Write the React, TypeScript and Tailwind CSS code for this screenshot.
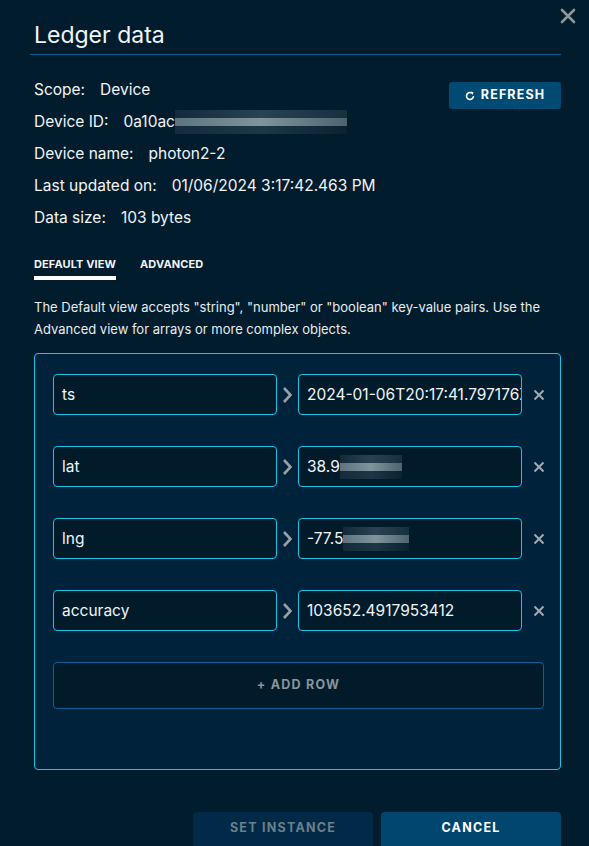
import React from "react";

const font = { fontFamily: "Inter, 'Open Sans', sans-serif" };

const Blur = ({ w }: { w: string }) => (
  <span className={`inline-flex flex-col h-[24px] ${w} align-middle`}>
    <span className="h-[8px] bg-gradient-to-r from-[#122a3a] via-[#2a4352] to-[#15303f]" />
    <span className="h-[8px] bg-gradient-to-r from-[#5d737f] via-[#7f949c] to-[#4d6470]" />
    <span className="h-[8px] bg-gradient-to-r from-[#142c3b] via-[#1d3746] to-[#0b2231]" />
  </span>
);

const rows = [
  { k: "ts", v: "2024-01-06T20:17:41.797176Z", blur: "" },
  { k: "lat", v: "38.9", blur: "w-[62px]" },
  { k: "lng", v: "-77.5", blur: "w-[66px]" },
  { k: "accuracy", v: "103652.4917953412", blur: "" },
];

const Info = ({ label, children }: { label: string; children: React.ReactNode }) => (
  <div className="flex items-center h-[32px]">
    <span className="mr-[15px]">{label}</span>
    {children}
  </div>
);

export default function App() {
  return (
    <div style={font} className="relative w-[589px] h-[846px] overflow-hidden bg-[#011c2d] text-[#f1f5f8]">
      <button className="absolute right-[12px] top-[7px] text-[#8e969c]">
        <svg width="18" height="18" viewBox="0 0 18 18">
          <path d="M3 3 L15 15 M15 3 L3 15" stroke="currentColor" strokeWidth="2.6" strokeLinecap="round" />
        </svg>
      </button>

      <div className="pl-[30px] pr-[28px] pt-[19px]">
        <h1 className="text-[23px] leading-[33px] pl-[4px] pb-[2px] border-b border-[#0a5e93]">Ledger data</h1>

        <div className="flex justify-between mt-[19px]">
          <div className="pl-[4px] text-[15.5px]">
            <Info label="Scope:">
              <span>Device</span>
            </Info>
            <Info label="Device ID:">
              <span>0a10ac</span>
              <Blur w="w-[172px]" />
            </Info>
            <Info label="Device name:">
              <span>photon2-2</span>
            </Info>
            <Info label="Last updated on:">
              <span>01/06/2024 3:17:42.463 PM</span>
            </Info>
            <Info label="Data size:">
              <span>103 bytes</span>
            </Info>
          </div>
          <button className="mt-[8px] h-[27px] w-[112px] rounded-[3px] bg-[#004a74] text-[12.5px] font-bold tracking-[0.09em] text-white flex items-center justify-center gap-[6px]">
            <svg width="10" height="10" viewBox="0 0 10 10">
              <path d="M8.5 5 A3.5 3.5 0 1 1 7 2.1" fill="none" stroke="white" strokeWidth="1.6" />
              <path d="M6 0.5 L8.6 1.6 L7.2 4 Z" fill="white" />
            </svg>
            REFRESH
          </button>
        </div>

        <div className="flex gap-[24px] mt-[22px] pl-[4px] text-[11px] font-bold tracking-[0.01em] uppercase">
          <div className="flex flex-col">
            <span className="leading-[16px]">Default View</span>
            <span className="h-[4px] bg-white mt-[4px]" />
          </div>
          <span className="leading-[16px]">Advanced</span>
        </div>

        <p className="mt-[16px] pl-[4px] text-[13px] leading-[22px] text-[#e8edf0]">
          The Default view accepts "string", "number" or "boolean" key-value pairs. Use the Advanced view for arrays or
          more complex objects.
        </p>

        <div className="ml-[4px] mt-[13px] w-[527px] h-[417px] rounded-[4px] border border-[#17c6e6] bg-[#00223a] px-[18px] pt-[20px]">
          <div className="flex flex-col gap-[31px]">
            {rows.map((r) => (
              <div key={r.k} className="flex items-center">
                <div className="shrink-0 w-[224px] h-[41px] rounded-[4px] border border-[#17c6e6] bg-[#011b2b] px-[8px] flex items-center text-[15.5px]">
                  {r.k}
                </div>
                <svg className="shrink-0 mx-[4px]" width="13" height="20" viewBox="0 0 13 20">
                  <path d="M3 3 L9.5 10 L3 17" fill="none" stroke="#9aa0a5" strokeWidth="2.6" />
                </svg>
                <div className="shrink-0 w-[224px] h-[41px] rounded-[4px] border border-[#17c6e6] bg-[#011b2b] px-[8px] flex items-center text-[15.5px] overflow-hidden whitespace-nowrap">
                  {r.v}
                  {r.blur && <Blur w={r.blur} />}
                </div>
                <svg className="shrink-0 ml-[11px]" width="12" height="12" viewBox="0 0 12 12">
                  <path d="M1.5 1.5 L10.5 10.5 M10.5 1.5 L1.5 10.5" stroke="#a4a9ad" strokeWidth="2" />
                </svg>
              </div>
            ))}
          </div>
          <button className="mt-[31px] w-[491px] h-[47px] rounded-[4px] border border-[#0b5f95] bg-[#011b2b] text-[12.5px] font-bold tracking-[0.1em] text-[#8a949a]">
            + ADD ROW
          </button>
        </div>

        <div className="flex justify-end gap-[8px] mt-[42px]">
          <button className="w-[180px] h-[40px] rounded-t-[4px] bg-[#002a47] text-[12.5px] font-bold tracking-[0.1em] text-[#6d7f8b] pb-[8px]">
            SET INSTANCE
          </button>
          <button className="w-[180px] h-[40px] rounded-t-[4px] bg-[#00466f] text-[12.5px] font-bold tracking-[0.1em] text-white pb-[8px]">
            CANCEL
          </button>
        </div>
      </div>
    </div>
  );
}
